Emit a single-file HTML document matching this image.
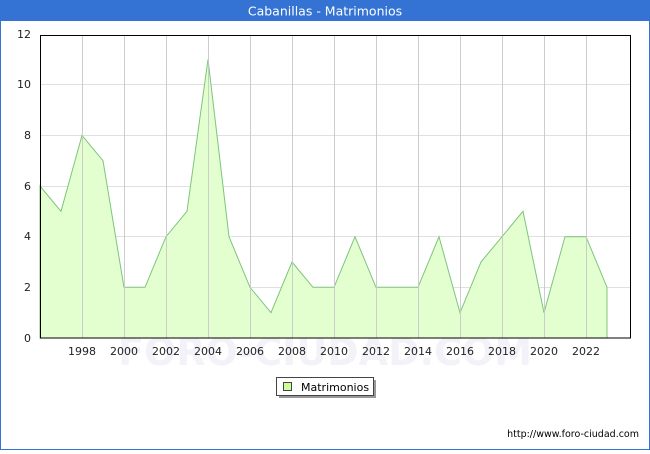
<!DOCTYPE html>
<html><head><meta charset="utf-8"><style>
body{margin:0;width:650px;height:450px;overflow:hidden;background:#fff;font-family:"DejaVu Sans","Liberation Sans",sans-serif}
</style></head><body>
<svg width="650" height="450" xmlns="http://www.w3.org/2000/svg" font-family="DejaVu Sans, Liberation Sans, sans-serif">
<rect x="0" y="0" width="650" height="450" fill="#fff"/>
<rect x="0.5" y="0.5" width="649" height="449" fill="none" stroke="#3473d4" stroke-width="1"/>
<rect x="0" y="0" width="650" height="21" fill="#3473d4"/>
<text x="325" y="15.5" fill="#fff" font-size="12.5" text-anchor="middle">Cabanillas - Matrimonios</text>
<text x="325" y="365" fill="#f2f2f8" font-size="38" text-anchor="middle" font-weight="bold">FORO-CIUDAD.COM</text>
<g stroke="#e0e0e0" stroke-width="1">
<line x1="40" y1="84.5" x2="630" y2="84.5"/><line x1="40" y1="135.5" x2="630" y2="135.5"/>
<line x1="40" y1="186.5" x2="630" y2="186.5"/><line x1="40" y1="236.5" x2="630" y2="236.5"/>
<line x1="40" y1="287.5" x2="630" y2="287.5"/>
</g>
<polygon fill="#e3ffcf" stroke="#7dc47d" stroke-width="1" points="40,338 40,186 61,211.3 82,135.4 103,160.7 124,287.3 145,287.3 166,236.7 187,211.3 208,59.4 229,236.7 250,287.3 271,312.7 292,262 313,287.3 334,287.3 355,236.7 376,287.3 397,287.3 418,287.3 439,236.7 460,312.7 481,262 502,236.7 523,211.3 544,312.7 565,236.7 586,236.7 607,287.3 607,338"/>
<g stroke="#c8c8c8" stroke-width="1" opacity="0.9">
<line x1="82.5" y1="35" x2="82.5" y2="338"/><line x1="124.5" y1="35" x2="124.5" y2="338"/>
<line x1="166.5" y1="35" x2="166.5" y2="338"/><line x1="208.5" y1="35" x2="208.5" y2="338"/>
<line x1="250.5" y1="35" x2="250.5" y2="338"/><line x1="292.5" y1="35" x2="292.5" y2="338"/>
<line x1="334.5" y1="35" x2="334.5" y2="338"/><line x1="376.5" y1="35" x2="376.5" y2="338"/>
<line x1="418.5" y1="35" x2="418.5" y2="338"/><line x1="460.5" y1="35" x2="460.5" y2="338"/>
<line x1="502.5" y1="35" x2="502.5" y2="338"/><line x1="544.5" y1="35" x2="544.5" y2="338"/>
<line x1="586.5" y1="35" x2="586.5" y2="338"/>
</g>
<rect x="40.5" y="35.5" width="590" height="302.5" fill="none" stroke="#000" stroke-width="1"/>
<g font-size="11" fill="#222" text-anchor="end">
<text x="31" y="38">12</text><text x="31" y="88">10</text><text x="31" y="139">8</text>
<text x="31" y="190">6</text><text x="31" y="240">4</text><text x="31" y="291">2</text><text x="31" y="342">0</text>
</g>
<g font-size="11" fill="#222" text-anchor="middle">
<text x="82" y="355">1998</text><text x="124" y="355">2000</text><text x="166" y="355">2002</text>
<text x="208" y="355">2004</text><text x="250" y="355">2006</text><text x="292" y="355">2008</text>
<text x="334" y="355">2010</text><text x="376" y="355">2012</text><text x="418" y="355">2014</text>
<text x="460" y="355">2016</text><text x="502" y="355">2018</text><text x="544" y="355">2020</text>
<text x="586" y="355">2022</text>
</g>
<rect x="279" y="380" width="97" height="18" fill="#999"/>
<rect x="276.5" y="377.5" width="97" height="18" fill="#fff" stroke="#444" stroke-width="1"/>
<rect x="283.5" y="382.5" width="8" height="8" fill="#ccff99" stroke="#444" stroke-width="1"/>
<text x="301" y="391" font-size="11" fill="#000">Matrimonios</text>
<text x="639" y="437" font-size="9.5" fill="#000" text-anchor="end">http://www.foro-ciudad.com</text>
</svg>
</body></html>
